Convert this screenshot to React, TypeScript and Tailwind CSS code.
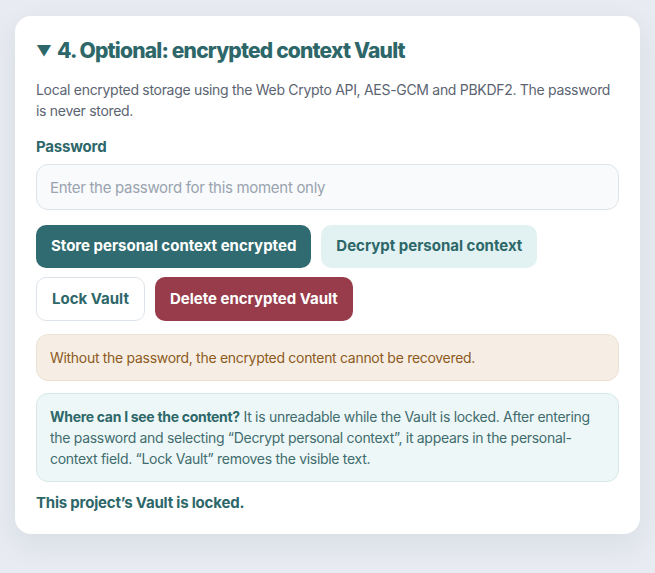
const font = { fontFamily: "Inter, 'Liberation Sans', sans-serif" }

export default function App() {
  return (
    <div className="min-h-screen bg-[#e8ebf1] pl-[15px] pr-[15px] pt-[16px]" style={font}>
      <section className="w-[625px] rounded-[16px] bg-white px-[21px] pb-[21px] pt-[21px] shadow-[0_10px_30px_rgba(30,45,80,0.08)]">
        <h2 className="flex items-center gap-[6px] text-[21px] font-extrabold leading-[28px] tracking-[-0.8px] text-[#2d6769]">
          <span className="text-[15px]">▼</span>
          <span>4. Optional: encrypted context Vault</span>
        </h2>
        <p className="mt-[14px] text-[14px] leading-[21px] tracking-[-0.3px] text-[#5b6472]">
          Local encrypted storage using the Web Crypto API, AES-GCM and PBKDF2. The password is never stored.
        </p>

        <label className="mt-[15px] block text-[15px] font-bold leading-[21px] tracking-[-0.2px] text-[#2d6769]">Password</label>
        <input
          type="password"
          placeholder="Enter the password for this moment only"
          className="mt-[7px] h-[46px] w-full rounded-[12px] border border-[#dde3ea] bg-[#f8fafc] px-[13px] text-[15px] tracking-[-0.3px] text-[#334155] placeholder:text-[#9aa3af] outline-none"
        />

        <div className="mt-[15px] flex flex-wrap gap-x-[10px] gap-y-[9px]">
          <button className="h-[43px] rounded-[10px] bg-[#2f6b70] px-[15px] text-[15px] font-bold text-white">
            Store personal context encrypted
          </button>
          <button className="h-[43px] rounded-[10px] bg-[#e2f2f2] px-[15px] text-[15px] font-bold text-[#2d6769]">
            Decrypt personal context
          </button>
          <button className="h-[44px] rounded-[10px] border border-[#dde3ea] bg-white px-[15px] text-[15px] font-bold text-[#2d6769]">
            Lock Vault
          </button>
          <button className="h-[44px] rounded-[10px] bg-[#983b4b] px-[15px] text-[15px] font-bold text-white">
            Delete encrypted Vault
          </button>
        </div>

        <div className="mt-[13px] rounded-[12px] border border-[#ebe2d6] bg-[#f6eee4] px-[13px] py-[12px] text-[14px] leading-[21px] tracking-[-0.3px] text-[#8d5a22]">
          Without the password, the encrypted content cannot be recovered.
        </div>

        <div className="mt-[12px] rounded-[12px] border border-[#d6e8e8] bg-[#eef7f7] px-[13px] py-[12px] text-[14px] leading-[21px] tracking-[-0.3px] text-[#3f6c6e]">
          <strong className="font-bold text-[#2d6769]">Where can I see the content?</strong> It is unreadable while the Vault is locked. After entering the password and selecting “Decrypt personal context”, it appears in the personal-context field. “Lock Vault” removes the visible text.
        </div>

        <p className="mt-[10px] text-[15px] font-bold leading-[21px] tracking-[-0.2px] text-[#2d6769]">This project’s Vault is locked.</p>
      </section>
    </div>
  )
}
